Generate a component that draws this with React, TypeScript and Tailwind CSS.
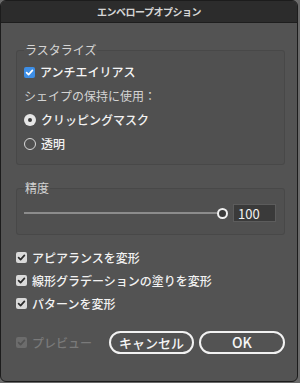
import React from 'react';

const font = { fontFamily: '"Noto Sans CJK JP", "Noto Sans", sans-serif' };

const Check = ({ color }: { color: string }) => (
  <svg viewBox="0 0 11 11" className="h-[11px] w-[11px]">
    <polyline points="2.6,5.6 4.6,7.6 8.4,3.4" fill="none" stroke={color} strokeWidth="1.7" strokeLinecap="round" strokeLinejoin="round" />
  </svg>
);

const CheckRow = ({ label, disabled = false }: { label: string; disabled?: boolean }) => (
  <div className="flex h-[23px] items-center gap-[5px]">
    <span className={`flex h-[11px] w-[11px] items-center justify-center rounded-[2px] ${disabled ? 'bg-[#6c6c6c]' : 'bg-[#d9d9d9]'}`}>
      <Check color={disabled ? '#535353' : '#2b2b2b'} />
    </span>
    <span className={`text-[12px] font-medium leading-none ${disabled ? 'text-[#7a7a7a]' : 'text-[#f2f2f2]'}`}>{label}</span>
  </div>
);

const Radio = ({ label, checked }: { label: string; checked?: boolean }) => (
  <div className="flex h-[24px] items-center gap-[5px]">
    {checked ? (
      <span className="flex h-[12px] w-[12px] items-center justify-center rounded-full bg-[#e6e6e6]">
        <span className="h-[4px] w-[4px] rounded-full bg-[#3a3a3a]" />
      </span>
    ) : (
      <span className="h-[12px] w-[12px] rounded-full border border-[#d8d8d8]" />
    )}
    <span className="text-[12px] font-medium leading-none text-[#f2f2f2]">{label}</span>
  </div>
);

export default function App() {
  return (
    <div className="h-[383px] w-[300px] bg-[#6a6a6a]" style={font}>
      <div className="flex h-[382px] w-[298px] flex-col overflow-hidden rounded-[6px] border border-[#1c1c1c] bg-[#535353]">
        <div className="flex h-[22px] shrink-0 items-center justify-center border-b border-[#1e1e1e] bg-[#2c2c2c]">
          <span className="text-[10px] font-bold tracking-[-0.5px] text-[#d6d6d6]">エンベロープオプション</span>
        </div>

        <div className="flex flex-col pl-[15px] pr-[12px]">
          <fieldset className="mt-[20px] rounded-[3px] border border-[#484848] bg-[#505050] pb-[8px] pl-[7px] pr-[7px]">
            <legend className="px-[1px] text-[12px] leading-[14px] text-[#d4d4d4]">ラスタライズ</legend>
            <div className="flex flex-col pt-[3px]">
              <div className="flex h-[24px] items-center gap-[5px]">
                <span className="flex h-[11px] w-[11px] items-center justify-center rounded-[2px] bg-[#3d8ee6]">
                  <Check color="#ffffff" />
                </span>
                <span className="text-[12px] font-medium leading-none text-[#f5f5f5]">アンチエイリアス</span>
              </div>
              <div className="flex h-[24px] items-center text-[12px] leading-none text-[#d4d4d4]">シェイプの保持に使用：</div>
              <Radio label="クリッピングマスク" checked />
              <Radio label="透明" />
            </div>
          </fieldset>

          <fieldset className="mt-[16px] rounded-[3px] border border-[#484848] bg-[#505050] pb-[10px] pl-[7px] pr-[8px]">
            <legend className="px-[1px] text-[12px] leading-[14px] text-[#d4d4d4]">精度</legend>
            <div className="flex h-[22px] items-center mt-[7px]">
              <div className="h-[2px] flex-1 bg-[#8c8c8c]" />
              <span className="h-[11px] w-[11px] rounded-full border-2 border-[#f0f0f0] bg-[#3a3a3a]" />
              <div className="ml-[5px] flex h-[18px] w-[43px] items-center border border-[#5c5c5c] bg-[#3a3a3a] pl-[4px] text-[13px] leading-none text-[#f2f2f2]">
                100
              </div>
            </div>
          </fieldset>

          <div className="mt-[11px] flex flex-col">
            <CheckRow label="アピアランスを変形" />
            <CheckRow label="線形グラデーションの塗りを変形" />
            <CheckRow label="パターンを変形" />
          </div>

          <div className="mt-[16px] flex items-center">
            <div className="flex-1">
              <CheckRow label="プレビュー" disabled />
            </div>
            <button className="flex h-[23px] w-[85px] items-center justify-center rounded-full border-2 border-[#f2f2f2] text-[13px] font-medium text-[#f5f5f5]">
              キャンセル
            </button>
            <button className="ml-[5px] flex h-[23px] w-[86px] items-center justify-center rounded-full border-2 border-[#f2f2f2] text-[14px] font-medium text-[#f5f5f5]">
              OK
            </button>
          </div>
        </div>
      </div>
    </div>
  );
}
